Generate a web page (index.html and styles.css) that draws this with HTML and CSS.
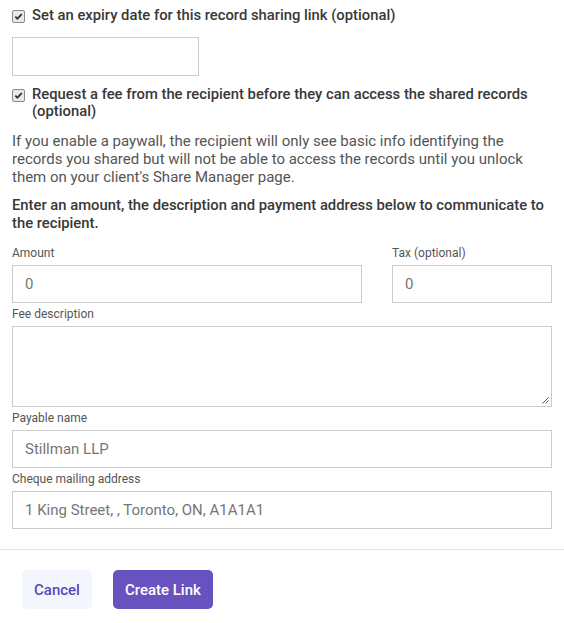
FILE: index.html
```html
<!DOCTYPE html>
<html>
<head>
<meta charset="utf-8">
<link rel="stylesheet" href="styles.css">
</head>
<body>
<div class="form">
  <label class="check-row">
    <span class="cbox"><svg viewBox="0 0 11 11" width="11" height="11"><path d="M2.3 5.6 L4.4 7.7 L8.8 3.1" fill="none" stroke="#333" stroke-width="1.8"/></svg></span>
    <span class="check-text">Set an expiry date for this record sharing link (optional)</span>
  </label>
  <div class="date-input"></div>
  <label class="check-row second">
    <span class="cbox"><svg viewBox="0 0 11 11" width="11" height="11"><path d="M2.3 5.6 L4.4 7.7 L8.8 3.1" fill="none" stroke="#333" stroke-width="1.8"/></svg></span>
    <span class="check-text">Request a fee from the recipient before they can access the shared records (optional)</span>
  </label>
  <p class="info">If you enable a paywall, the recipient will only see basic info identifying the records you shared but will not be able to access the records until you unlock them on your client's Share Manager page.</p>
  <p class="lead">Enter an amount, the description and payment address below to communicate to the recipient.</p>
  <div class="row">
    <div class="field grow">
      <div class="label">Amount</div>
      <div class="input">0</div>
    </div>
    <div class="field tax">
      <div class="label">Tax (optional)</div>
      <div class="input">0</div>
    </div>
  </div>
  <div class="field block">
    <div class="label">Fee description</div>
    <div class="textarea"><svg class="grip" viewBox="0 0 8 8" width="8" height="8"><path d="M7.5 1.5 L1.5 7.5 M7.5 4.5 L4.5 7.5" stroke="#555" stroke-width="1"/></svg></div>
  </div>
  <div class="field block">
    <div class="label">Payable name</div>
    <div class="input">Stillman LLP</div>
  </div>
  <div class="field block">
    <div class="label">Cheque mailing address</div>
    <div class="input">1 King Street, , Toronto, ON, A1A1A1</div>
  </div>
</div>
<div class="footer">
  <button class="btn cancel">Cancel</button>
  <button class="btn primary">Create Link</button>
</div>
</body>
</html>
```
FILE: styles.css
```css
html, body {
  margin: 0;
  padding: 0;
  background: #fff;
  font-family: Roboto, "Liberation Sans", sans-serif;
  color: #333;
}
.form {
  padding: 0 12px 0 12px;
}
.check-row {
  display: flex;
  align-items: flex-start;
  gap: 7px;
  padding-top: 7px;
}
.check-row.second {
  padding-top: 10px;
}
.cbox {
  flex: none;
  width: 11px;
  height: 11px;
  margin-top: 3px;
  border: 1px solid #8a8a8a;
  border-radius: 2px;
  background: #e9e9e9;
  display: flex;
  align-items: center;
  justify-content: center;
}
.cbox svg { display: block; }
.check-text {
  font-size: 14.8px;
  font-weight: 500;
  line-height: 17px;
  color: #383838;
  padding-right: 10px;
}
.date-input {
  width: 187px;
  height: 39px;
  margin-top: 13px;
  border: 1px solid #ccc;
  box-sizing: border-box;
}
.info {
  margin: 12px 0 0 0;
  font-size: 15px;
  line-height: 18px;
  color: #555;
}
.lead {
  margin: 10px 0 0 0;
  font-size: 14.8px;
  font-weight: 500;
  line-height: 18px;
  color: #383838;
}
.row {
  display: flex;
  gap: 30px;
  margin-top: 11px;
}
.grow { flex: 1; }
.tax { width: 160px; flex: none; }
.field { display: flex; flex-direction: column; }
.label {
  font-size: 12px;
  line-height: 14px;
  color: #555;
  margin-bottom: 5px;
  margin-top: 3px;
}
.block .label { margin-top: 4px; }
.input {
  height: 38px;
  box-sizing: border-box;
  border: 1px solid #ccc;
  padding: 0 12px;
  display: flex;
  align-items: center;
  font-size: 15px;
  color: #767676;
}
.textarea {
  height: 81px;
  box-sizing: border-box;
  border: 1px solid #ccc;
  position: relative;
}
.grip {
  position: absolute;
  right: 2px;
  bottom: 2px;
}
.footer {
  margin-top: 20px;
  border-top: 1px solid #e4e4e4;
  padding: 20px 22px;
  display: flex;
  gap: 21px;
}
.btn {
  height: 39px;
  border: none;
  border-radius: 5px;
  font-family: Roboto, "Liberation Sans", sans-serif;
  font-size: 15px;
  font-weight: 500;
  padding: 0 12px;
}
.cancel {
  background: #f3f6fd;
  color: #5a47b5;
}
.primary {
  background: #6752bf;
  color: #fff;
}
```
